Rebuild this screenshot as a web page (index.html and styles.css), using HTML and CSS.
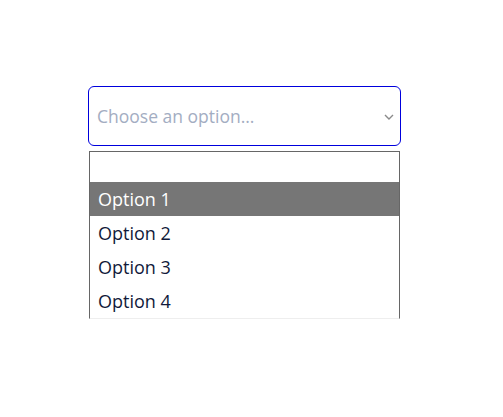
FILE: index.html
```html
<!DOCTYPE html>
<html>
<head>
<meta charset="utf-8">
<link rel="stylesheet" href="styles.css">
</head>
<body>
<div class="wrap">
  <div class="select">
    <span class="placeholder">Choose an option...</span>
    <svg class="chev" width="10" height="6" viewBox="0 0 10 6"><path d="M1 1 L5 5 L9 1" fill="none" stroke="#8a8a8a" stroke-width="1.4"/></svg>
  </div>
  <div class="listbox">
    <div class="row empty"></div>
    <div class="row opt active">Option 1</div>
    <div class="row opt">Option 2</div>
    <div class="row opt">Option 3</div>
    <div class="row opt">Option 4</div>
  </div>
</div>
</body>
</html>
```
FILE: styles.css
```css
html, body { margin: 0; background: #fff; }
body { font-family: "Open Sans", "DejaVu Sans", sans-serif; }
.wrap { padding: 86px 0 0 88px; width: 313px; }
.select {
  box-sizing: border-box;
  width: 313px; height: 60px;
  border: 1px solid #0000dd;
  border-radius: 6px;
  display: flex; align-items: center; justify-content: space-between;
  padding: 0 6px 0 8px;
}
.placeholder { color: #a3adc2; font-size: 17.5px; }
.chev { display: block; margin-top: 1px; }
.listbox {
  box-sizing: border-box;
  margin: 5px 0 0 1px;
  width: 311px;
  border: 1px solid #666;
  border-bottom: 1px solid #eee;
}
.row { box-sizing: border-box; }
.empty { height: 30px; }
.opt {
  height: 34px; line-height: 34px;
  padding-left: 8px;
  font-size: 18px; color: #111a3a;
}
.opt.active { background: #767676; color: #fff; }
```
